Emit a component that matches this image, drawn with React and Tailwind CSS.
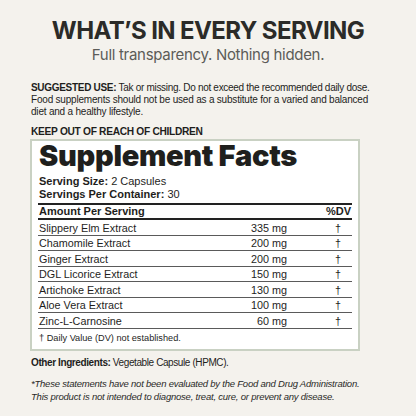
import React from 'react';

const rows = [
  { name: 'Slippery Elm Extract', amount: '335 mg' },
  { name: 'Chamomile Extract', amount: '200 mg' },
  { name: 'Ginger Extract', amount: '200 mg' },
  { name: 'DGL Licorice Extract', amount: '150 mg' },
  { name: 'Artichoke Extract', amount: '130 mg' },
  { name: 'Aloe Vera Extract', amount: '100 mg' },
  { name: 'Zinc-L-Carnosine', amount: '60 mg' },
];

export default function App() {
  return (
    <div className="w-[416px] h-[416px] overflow-hidden bg-[#f4f2ed] text-[#1e1e1c]">
      {/* Heading */}
      <div className="pt-[16px] text-center font-['Inter',sans-serif]">
        <h1 className="text-[24px] leading-[29px] font-bold tracking-[-0.6px] text-[#2b2b28]">WHAT’S IN EVERY SERVING</h1>
        <p className="text-[15px] leading-[20px] tracking-[-0.3px] text-[#5c5c58]">Full transparency. Nothing hidden.</p>
      </div>

      {/* Label copy */}
      <div className="ml-[31px] w-[317px] mt-[17px] font-['Liberation_Sans',sans-serif]">
        <div className="text-[10px] leading-[12px]">
          <div className="whitespace-nowrap tracking-[-0.3px]"><span className="font-bold">SUGGESTED USE:</span> Tak or missing. Do not exceed the recommended daily dose.</div>
          <div className="whitespace-nowrap tracking-[-0.2px]">Food supplements should not be used as a substitute for a varied and balanced</div>
          <div className="whitespace-nowrap tracking-[-0.2px]">diet and a healthy lifestyle.</div>
        </div>
        <p className="mt-[6.5px] text-[10.2px] leading-[13px] tracking-[-0.3px] font-bold">KEEP OUT OF REACH OF CHILDREN</p>
      </div>

      {/* Supplement facts box */}
      <div className="ml-[30px] mt-[1.5px] w-[330px] h-[212px] border-2 border-[#c9d1c3] bg-white px-[6px] font-['Liberation_Sans',sans-serif]">
        <div className="pl-[1px] h-[30px] text-[29px] leading-[30px] font-black font-['Inter',sans-serif] tracking-[-0.3px] text-[#1f1f1d]">Supplement Facts</div>
        <div className="pl-[1px] pt-[4px] text-[11px] leading-[13px]">
          <div><span className="font-bold">Serving Size:</span> 2 Capsules</div>
          <div><span className="font-bold">Servings Per Container:</span> 30</div>
        </div>
        <div className="mt-[2px] border-t-2 border-[#222] flex items-center justify-between px-[1px] h-[15px] text-[11px] font-bold">
          <span>Amount Per Serving</span>
          <span>%DV</span>
        </div>
        <div className="border-t-2 border-[#222]">
          {rows.map((r) => (
            <div key={r.name} className="flex h-[15.5px] items-center border-b border-[#5a5a5a] px-[1px] pt-[1px] text-[10.8px]">
              <span className="flex-1">{r.name}</span>
              <span className="w-[50px] text-right">{r.amount}</span>
              <span className="w-[38px]" />
              <span className="w-[26px] text-center">†</span>
            </div>
          ))}
        </div>
        <div className="h-[20px] flex items-center px-[1px] text-[9.2px]">† Daily Value (DV) not established.</div>
      </div>

      {/* Footer copy */}
      <div className="pl-[31px] mt-[5px] font-['Liberation_Sans',sans-serif] text-[#1e1e1c]">
        <p className="text-[10px] leading-[14px] tracking-[-0.4px]"><span className="font-bold">Other Ingredients:</span> Vegetable Capsule (HPMC).</p>
        <p className="mt-[6.5px] text-[9.5px] leading-[13px] tracking-[-0.22px] italic text-[#2a2a28]">
          *These statements have not been evaluated by the Food and Drug Administration.<br />
          This product is not intended to diagnose, treat, cure, or prevent any disease.
        </p>
      </div>
    </div>
  );
}
